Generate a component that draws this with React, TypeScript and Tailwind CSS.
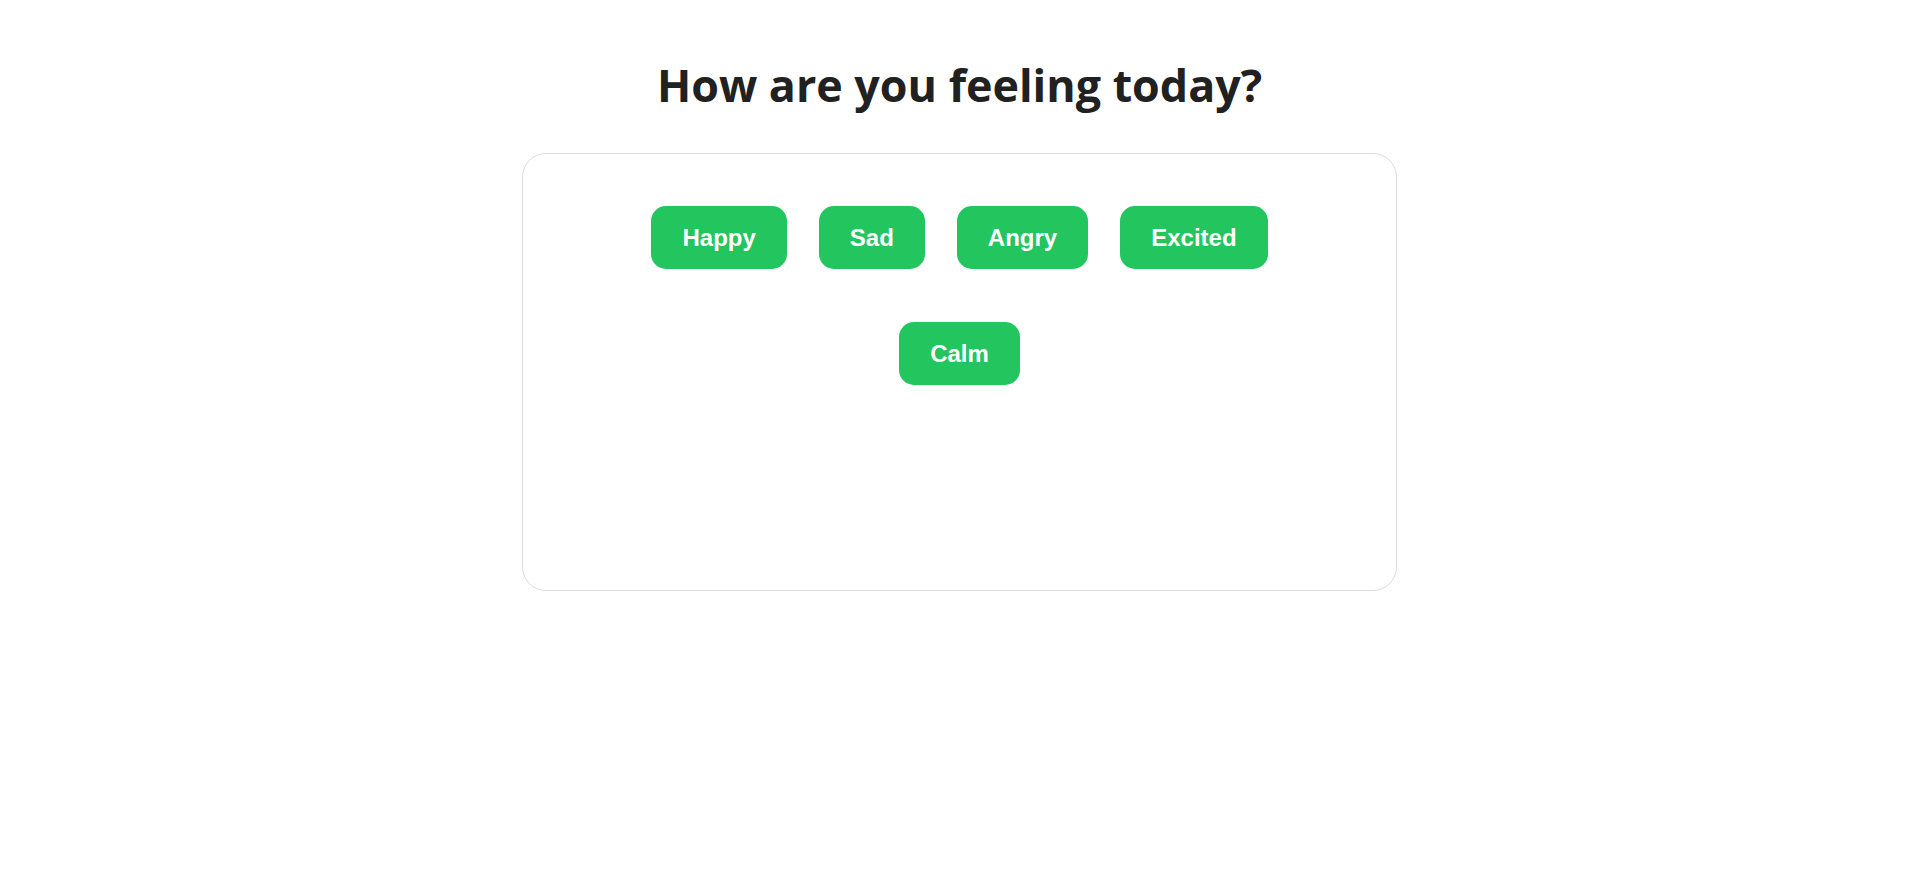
const moods = ['Happy', 'Sad', 'Angry', 'Excited', 'Calm'];

export default function App() {
  return (
    <div className="min-h-screen bg-white flex flex-col items-center pt-[54px]">
      <h1 className="font-['Open_Sans',sans-serif] text-[44.8px] leading-[61px] font-bold text-[#212121]">
        How are you feeling today?
      </h1>

      <div className="mt-[38px] w-[875px] h-[438px] border border-[#dddddd] rounded-[24px] flex justify-center pt-[52px]">
        <div className="w-[660px] flex flex-wrap justify-center content-start gap-x-[32px] gap-y-[53px]">
          {moods.map((mood) => (
            <button
              key={mood}
              className="h-[63px] px-[31px] rounded-[15px] bg-[#22c55e] text-white font-['Liberation_Sans',Arial,sans-serif] font-bold text-[24px] leading-[28px] cursor-pointer"
            >
              {mood}
            </button>
          ))}
        </div>
      </div>
    </div>
  );
}
